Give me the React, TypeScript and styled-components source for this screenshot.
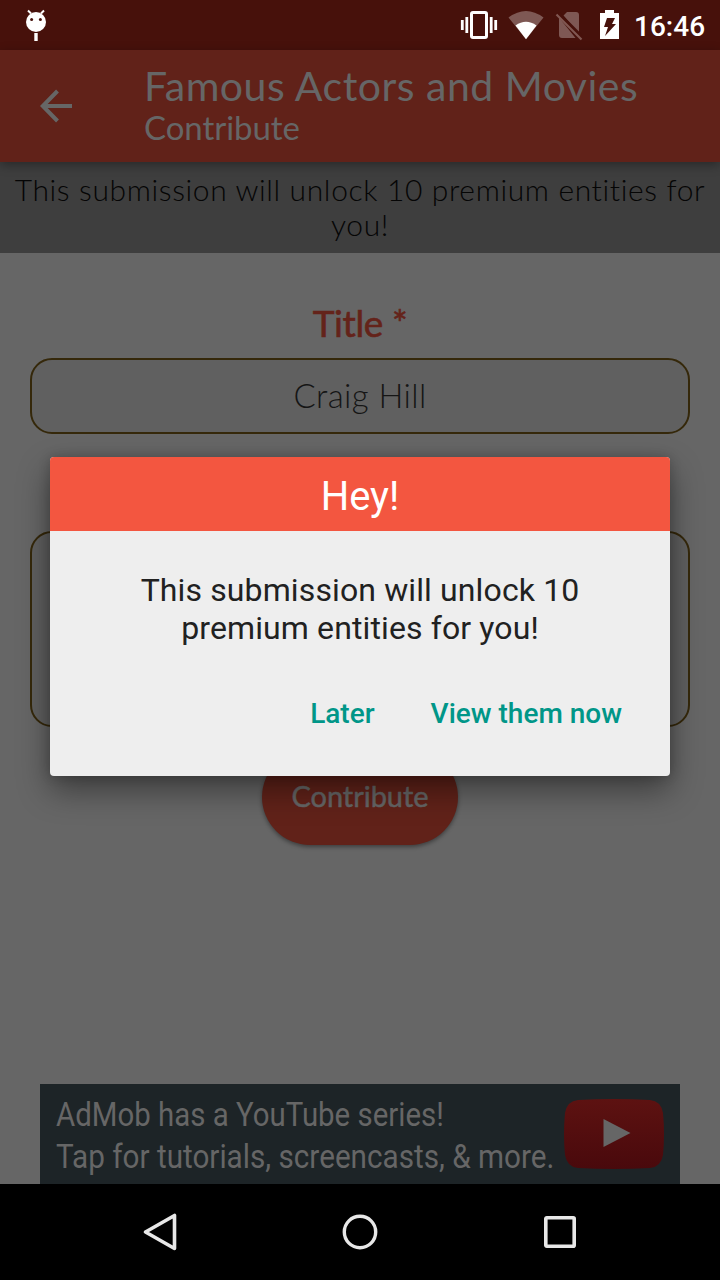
import React from "react";
import styled, { createGlobalStyle } from "styled-components";

const GlobalStyle = createGlobalStyle`
  * { box-sizing: border-box; }
  body { margin: 0; background: #666; font-family: Roboto, sans-serif; }
`;

const Screen = styled.div`
  position: relative;
  width: 720px;
  height: 1280px;
  display: flex;
  flex-direction: column;
  background: #666;
  overflow: hidden;
`;

const StatusBar = styled.header`
  height: 50px;
  flex: none;
  display: flex;
  justify-content: space-between;
  background: #47110b;
  color: #fff;
`;

const StatusIcons = styled.div`
  display: flex;
`;

const Clock = styled.time`
  width: 86px;
  font: 500 28px/53px Roboto, sans-serif;
  white-space: nowrap;
`;

const AppBar = styled.div`
  position: relative;
  z-index: 1;
  height: 112px;
  flex: none;
  display: flex;
  background: #612219;
  color: #666;
  box-shadow: 0 3px 10px rgba(0, 0, 0, 0.35);
`;

const BackButton = styled.button`
  width: 144px;
  padding: 0;
  border: 0;
  background: none;
  display: flex;
`;

const Headings = styled.div`
  padding-top: 12px;
  font-family: Lato, sans-serif;
`;

const AppTitle = styled.h1`
  margin: 0;
  font-size: 41px;
  font-weight: 400;
  line-height: 48px;
  letter-spacing: 0.5px;
  white-space: nowrap;
`;

const AppSubtitle = styled.div`
  font-size: 33px;
  line-height: 35px;
  letter-spacing: -0.05px;
`;

const Notice = styled.p`
  height: 91px;
  margin: 0;
  padding-top: 10px;
  flex: none;
  background: #3e3e3e;
  color: #050505;
  text-align: center;
  font: 300 30px/35px Lato, sans-serif;
  letter-spacing: 0.63px;
`;

const Form = styled.main`
  flex: 1;
  padding: 45px 30px 0;
  display: flex;
  flex-direction: column;
  align-items: center;
  font-family: Lato, sans-serif;
`;

const FieldLabel = styled.label`
  height: 60px;
  font-size: 37px;
  letter-spacing: -0.4px;
  line-height: 50px;
  color: #64231a;
  -webkit-text-stroke: 0.6px currentColor;
`;

const Field = styled.div<{ $height: number }>`
  width: 100%;
  height: ${(p) => p.$height}px;
  flex: none;
  border: 2px solid #35280a;
  border-radius: 22px;
  background: #606060;
  color: #151515;
  text-align: center;
  font-size: 33px;
  font-weight: 300;
  line-height: 71px;
  letter-spacing: 0.4px;
`;

const FieldGap = styled.div`
  height: 97px;
  flex: none;
`;

const SubmitButton = styled.button`
  width: 196px;
  height: 96px;
  margin-top: 22px;
  padding: 0 0 2px;
  border: 0;
  border-radius: 48px;
  background: #612219;
  color: #666;
  font: 400 29px/94px Lato, sans-serif;
  letter-spacing: -0.05px;
  -webkit-text-stroke: 0.5px currentColor;
  box-shadow: 0 2px 4px rgba(0, 0, 0, 0.4);
`;

const AdBanner = styled.aside`
  width: 640px;
  height: 100px;
  flex: none;
  align-self: center;
  padding: 9px 16px 11px;
  display: flex;
  justify-content: space-between;
  background: #1d2427;
  color: #666;
`;

const AdCopy = styled.div`
  width: 500px;
  font-size: 34px;
  line-height: 42px;
`;

const AdLine = styled.div<{ $scale: number }>`
  width: max-content;
  white-space: nowrap;
  transform: scaleX(${(p) => p.$scale});
  transform-origin: left;
`;

const NavBar = styled.nav`
  height: 96px;
  flex: none;
  padding: 0 60px;
  display: flex;
  background: #000;
`;

const NavButton = styled.button`
  flex: 1;
  padding: 0;
  border: 0;
  background: none;
  display: flex;
  align-items: center;
  justify-content: center;
`;

const Dialog = styled.section`
  position: absolute;
  z-index: 2;
  left: 50px;
  top: 457px;
  width: 620px;
  height: 319px;
  border-radius: 4px;
  background: #eee;
  box-shadow: 0 14px 32px rgba(0, 0, 0, 0.42), 0 0 12px rgba(0, 0, 0, 0.2);
`;

const DialogTitle = styled.h2`
  height: 74px;
  margin: 0;
  border-radius: 4px 4px 0 0;
  background: #f35640;
  color: #fff;
  text-align: center;
  font: 400 40px/80px Roboto, sans-serif;
`;

const DialogMessage = styled.p`
  margin: 0;
  padding: 40px 70px 0;
  color: #212121;
  text-align: center;
  font-size: 32px;
  line-height: 38px;
  letter-spacing: 0.12px;
`;

const DialogActions = styled.div`
  padding: 42px 48px 0 0;
  display: flex;
  justify-content: flex-end;
  gap: 56px;
`;

const DialogAction = styled.button`
  padding: 0;
  border: 0;
  background: none;
  color: #009688;
  font: 500 28px/50px Roboto, sans-serif;
`;

export default function App() {
  return (
    <>
      <GlobalStyle />
      <Screen>
        <StatusBar>
          <svg width="72" height="50" viewBox="0 0 72 50">
            <circle cx="36" cy="22" r="10" fill="#fff" />
            <path d="M28 10.5l3 3M44 10.5l-3 3" stroke="#fff" strokeWidth="2" />
            <path d="M36 33v8" stroke="#fff" strokeWidth="3.4" />
            <circle cx="31.6" cy="19.4" r="1.5" fill="#47110b" />
            <circle cx="40.4" cy="19.4" r="1.5" fill="#47110b" />
          </svg>
          <StatusIcons>
            <svg width="180" height="50" viewBox="454 0 180 50">
              <rect x="471.500" y="12.500" width="15" height="25" rx="1.500" fill="none" stroke="#fff" strokeWidth="3" />
              <path d="M462.300 20v10M466.800 17v16M491.200 17v16M495.700 20v10" stroke="#fff" strokeWidth="2.800" />
              <path d="M508.500 17.500Q526 4.500 543.500 17.500L526 39.300z" fill="#fff" opacity=".3" />
              <path d="M515.500 25.500Q526 18 536.500 25.500L526 39.300z" fill="#fff" />
              <path d="M563.500 15.500L567 12h9q3 0 3 3v18.500zM559 17.500L575.500 38H562q-3 0-3-3z" fill="#fff" opacity=".3" />
              <path d="M556.500 14.500l25 25" stroke="#805752" strokeWidth="2.200" />
              <path d="M558.700 12.700l23 23" stroke="#47110b" strokeWidth="2" />
              <path d="M600 13h5v-3h9v3h5v26h-19z" fill="#fff" />
              <path d="M607 18h8l-3 6h4L605 36l3-9h-4z" fill="#47110b" />
            </svg>
            <Clock>16:46</Clock>
          </StatusIcons>
        </StatusBar>
        <AppBar>
          <BackButton aria-label="Back">
            <svg width="144" height="112" viewBox="0 0 144 112">
              <path d="M72 56H43M57.500 41L42.800 56l14.700 15" fill="none" stroke="#666" strokeWidth="4" />
            </svg>
          </BackButton>
          <Headings>
            <AppTitle>Famous Actors and Movies</AppTitle>
            <AppSubtitle>Contribute</AppSubtitle>
          </Headings>
        </AppBar>
        <Notice>
          This submission will unlock 10 premium entities for
          <br />
          you!
        </Notice>
        <Form>
          <FieldLabel>Title *</FieldLabel>
          <Field $height={76}>Craig Hill</Field>
          <FieldGap />
          <Field $height={196} />
          <SubmitButton>Contribute</SubmitButton>
        </Form>
        <AdBanner>
          <AdCopy>
            <AdLine $scale={0.865}>AdMob has a YouTube series!</AdLine>
            <AdLine $scale={0.873}>Tap for tutorials, screencasts, &amp; more.</AdLine>
          </AdCopy>
          <svg width="100" height="80" viewBox="564 1093 100 80">
            <defs>
              <linearGradient id="play-red" x1="0" y1="0" x2="0" y2="1">
                <stop offset="0" stopColor="#5d1211" />
                <stop offset="1" stopColor="#49090c" />
              </linearGradient>
            </defs>
            <path d="M578 1100Q614 1098 650 1100Q661 1101 663 1113Q665 1134 663 1155Q661 1167 650 1168Q614 1170 578 1168Q567 1167 565 1155Q563 1134 565 1113Q567 1101 578 1100z" fill="url(#play-red)" />
            <path d="M603.500 1119L630.500 1133L603.500 1147z" fill="#666" />
          </svg>
        </AdBanner>
        <NavBar>
          <NavButton aria-label="Back">
            <svg width="40" height="40" viewBox="140 1212 40 40">
              <path d="M174.500 1215.500v33L145.500 1232z" fill="none" stroke="#e8e8e8" strokeWidth="3.600" strokeLinejoin="round" />
            </svg>
          </NavButton>
          <NavButton aria-label="Home">
            <svg width="40" height="40" viewBox="0 0 40 40">
              <circle cx="20" cy="20" r="15.700" fill="none" stroke="#e8e8e8" strokeWidth="3.400" />
            </svg>
          </NavButton>
          <NavButton aria-label="Recent apps">
            <svg width="40" height="40" viewBox="0 0 40 40">
              <rect x="5.800" y="5.800" width="28.400" height="28.400" rx="1" fill="none" stroke="#e8e8e8" strokeWidth="3.600" />
            </svg>
          </NavButton>
        </NavBar>
        <Dialog role="dialog" aria-label="Hey!">
          <DialogTitle>Hey!</DialogTitle>
          <DialogMessage>
            This submission will unlock 10
            <br />
            premium entities for you!
          </DialogMessage>
          <DialogActions>
            <DialogAction>Later</DialogAction>
            <DialogAction>View them now</DialogAction>
          </DialogActions>
        </Dialog>
      </Screen>
    </>
  );
}
